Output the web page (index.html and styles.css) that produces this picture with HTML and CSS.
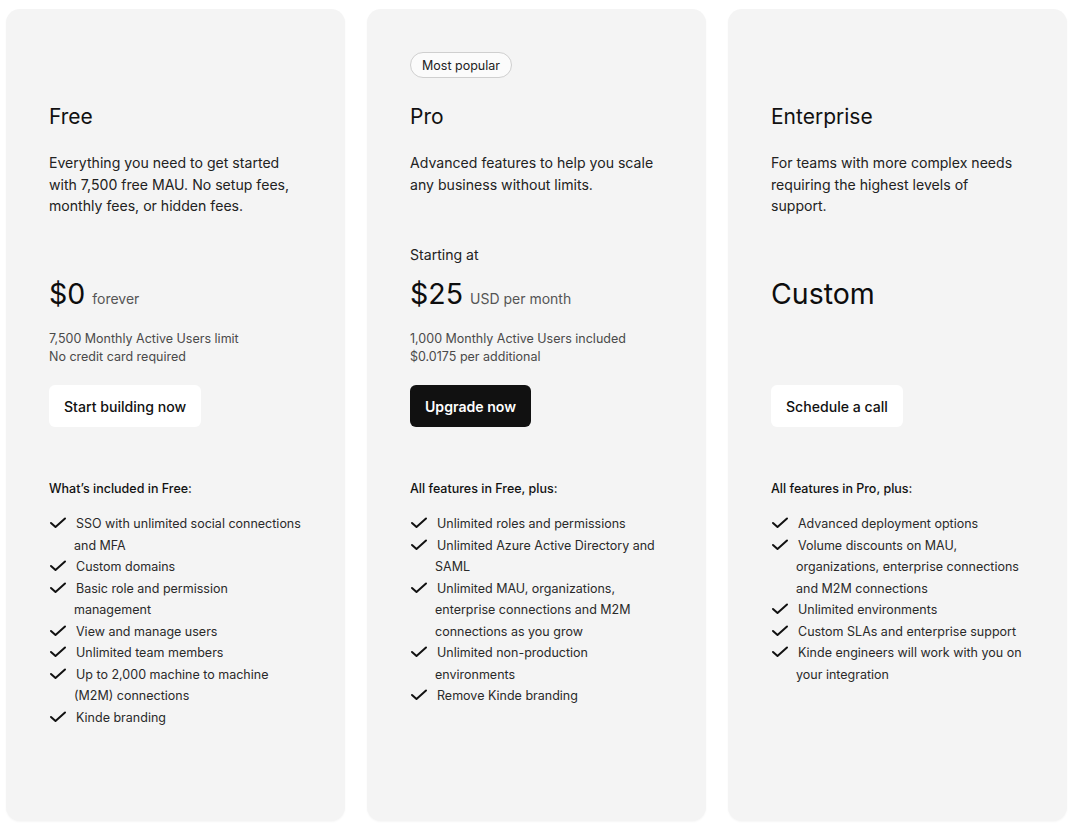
FILE: index.html
```html
<!DOCTYPE html>
<html lang="en">
<head>
<meta charset="utf-8">
<title>Pricing</title>
<link rel="stylesheet" href="styles.css">
</head>
<body>
<main class="plans">
  <section class="card">
    <div class="badge-slot"></div>
    <h2 class="plan-name">Free</h2>
    <p class="desc">Everything you need to get started with 7,500 free MAU. No setup fees, monthly fees, or hidden fees.</p>
    <p class="starting"></p>
    <div class="price"><span class="amount">$0</span><span class="unit">forever</span></div>
    <p class="note">7,500 Monthly Active Users limit<br>No credit card required</p>
    <div class="btn-row"><a class="btn btn-light">Start building now</a></div>
    <h3 class="feat-title">What’s included in Free:</h3>
    <ul class="features">
      <li><svg class="check" viewBox="0 0 18 12"><path d="M2 6 L6.5 10 L16 1.5"/></svg>SSO with unlimited social connections and MFA</li>
      <li><svg class="check" viewBox="0 0 18 12"><path d="M2 6 L6.5 10 L16 1.5"/></svg>Custom domains</li>
      <li><svg class="check" viewBox="0 0 18 12"><path d="M2 6 L6.5 10 L16 1.5"/></svg>Basic role and permission management</li>
      <li><svg class="check" viewBox="0 0 18 12"><path d="M2 6 L6.5 10 L16 1.5"/></svg>View and manage users</li>
      <li><svg class="check" viewBox="0 0 18 12"><path d="M2 6 L6.5 10 L16 1.5"/></svg>Unlimited team members</li>
      <li><svg class="check" viewBox="0 0 18 12"><path d="M2 6 L6.5 10 L16 1.5"/></svg>Up to 2,000 machine to machine (M2M) connections</li>
      <li><svg class="check" viewBox="0 0 18 12"><path d="M2 6 L6.5 10 L16 1.5"/></svg>Kinde branding</li>
    </ul>
  </section>

  <section class="card">
    <div class="badge-slot"><span class="badge">Most popular</span></div>
    <h2 class="plan-name">Pro</h2>
    <p class="desc">Advanced features to help you scale any business without limits.</p>
    <p class="starting">Starting at</p>
    <div class="price"><span class="amount">$25</span><span class="unit">USD per month</span></div>
    <p class="note">1,000 Monthly Active Users included<br>$0.0175 per additional</p>
    <div class="btn-row"><a class="btn btn-dark">Upgrade now</a></div>
    <h3 class="feat-title">All features in Free, plus:</h3>
    <ul class="features">
      <li><svg class="check" viewBox="0 0 18 12"><path d="M2 6 L6.5 10 L16 1.5"/></svg>Unlimited roles and permissions</li>
      <li><svg class="check" viewBox="0 0 18 12"><path d="M2 6 L6.5 10 L16 1.5"/></svg>Unlimited Azure Active Directory and SAML</li>
      <li><svg class="check" viewBox="0 0 18 12"><path d="M2 6 L6.5 10 L16 1.5"/></svg>Unlimited MAU, organizations, enterprise connections and M2M connections as you grow</li>
      <li><svg class="check" viewBox="0 0 18 12"><path d="M2 6 L6.5 10 L16 1.5"/></svg>Unlimited non-production environments</li>
      <li><svg class="check" viewBox="0 0 18 12"><path d="M2 6 L6.5 10 L16 1.5"/></svg>Remove Kinde branding</li>
    </ul>
  </section>

  <section class="card">
    <div class="badge-slot"></div>
    <h2 class="plan-name">Enterprise</h2>
    <p class="desc">For teams with more complex needs requiring the highest levels of support.</p>
    <p class="starting"></p>
    <div class="price"><span class="amount">Custom</span></div>
    <p class="note"></p>
    <div class="btn-row"><a class="btn btn-light">Schedule a call</a></div>
    <h3 class="feat-title">All features in Pro, plus:</h3>
    <ul class="features">
      <li><svg class="check" viewBox="0 0 18 12"><path d="M2 6 L6.5 10 L16 1.5"/></svg>Advanced deployment options</li>
      <li><svg class="check" viewBox="0 0 18 12"><path d="M2 6 L6.5 10 L16 1.5"/></svg>Volume discounts on MAU, organizations, enterprise connections and M2M connections</li>
      <li><svg class="check" viewBox="0 0 18 12"><path d="M2 6 L6.5 10 L16 1.5"/></svg>Unlimited environments</li>
      <li><svg class="check" viewBox="0 0 18 12"><path d="M2 6 L6.5 10 L16 1.5"/></svg>Custom SLAs and enterprise support</li>
      <li><svg class="check" viewBox="0 0 18 12"><path d="M2 6 L6.5 10 L16 1.5"/></svg>Kinde engineers will work with you on your integration</li>
    </ul>
  </section>
</main>
</body>
</html>
```

FILE: styles.css
```css
* { box-sizing: border-box; }

html, body {
  margin: 0;
  padding: 0;
  background: #ffffff;
}

body {
  font-family: Inter, "Noto Sans", "Liberation Sans", sans-serif;
  color: #111;
  -webkit-font-smoothing: antialiased;
}

.plans {
  display: grid;
  grid-template-columns: repeat(3, 1fr);
  gap: 22px;
  height: 832px;
  padding: 9px 3px 11px 6px;
}

.card {
  background: #f4f4f4;
  border-radius: 14px;
  padding: 43px 41px 0 43px;
  box-shadow: 0 1px 2px rgba(0, 0, 0, 0.04);
  display: flex;
  flex-direction: column;
}

.badge-slot {
  height: 26px;
  display: flex;
}

.badge {
  display: inline-flex;
  align-items: center;
  height: 26px;
  padding: 0 11px;
  border: 1px solid #cfcfcf;
  border-radius: 13px;
  background: #fbfbfb;
  font-size: 12.5px;
  color: #222;
}

.plan-name {
  margin: 25px 0 0;
  font-size: 21px;
  line-height: 28px;
  font-weight: 400;
  color: #111;
}

.desc {
  margin: 21px 0 0;
  min-height: 65px;
  font-size: 14.1px;
  line-height: 21.5px;
  color: #222;
}

.starting {
  margin: 27px 0 0;
  height: 21.5px;
  font-size: 14.1px;
  line-height: 21.5px;
  color: #222;
}

.price {
  margin-top: 10.5px;
  height: 36px;
  display: flex;
  align-items: baseline;
  gap: 7px;
}

.amount {
  font-size: 28.5px;
  line-height: 36px;
  color: #0d0d0d;
}

.unit {
  font-size: 14px;
  color: #555;
}

.note {
  margin: 18px 0 0;
  height: 36px;
  font-size: 12.5px;
  line-height: 18px;
  color: #4a4a4a;
}

.btn-row {
  margin-top: 19px;
  display: flex;
}

.btn {
  display: inline-flex;
  align-items: center;
  height: 42px;
  padding: 0 15px;
  border-radius: 6px;
  font-size: 14.1px;
  font-weight: 500;
  cursor: pointer;
}

.btn-light {
  background: #ffffff;
  color: #111;
}

.btn-dark {
  background: #111111;
  color: #ffffff;
  font-weight: 600;
}

.feat-title {
  margin: 52px 0 0;
  font-size: 12.5px;
  line-height: 20px;
  font-weight: 500;
  color: #111;
}

.features {
  list-style: none;
  margin: 14px 0 0;
  padding: 0 0 0 25px;
}

.features li {
  text-indent: -25px;
  font-size: 12.5px;
  line-height: 21.5px;
  color: #2a2a2a;
}

.check {
  width: 18px;
  height: 12px;
  margin-right: 9px;
  vertical-align: -1px;
  fill: none;
  stroke: #111;
  stroke-width: 2;
  stroke-linecap: round;
  stroke-linejoin: round;
}
```
